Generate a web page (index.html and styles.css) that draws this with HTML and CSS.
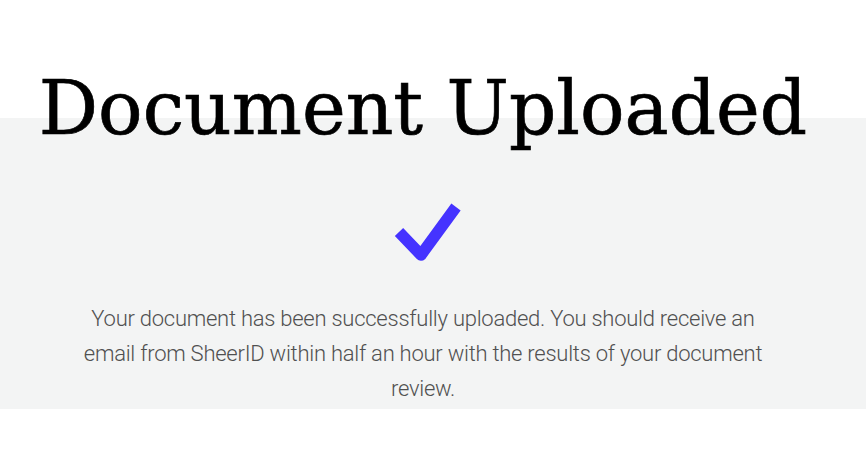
FILE: index.html
```html
<!DOCTYPE html>
<html>
<head>
<meta charset="utf-8">
<link rel="stylesheet" href="styles.css">
</head>
<body>
<main class="page">
  <h1 class="title">Document Uploaded</h1>
  <section class="panel">
    <svg class="check" width="74" height="70" viewBox="0 0 74 70">
      <path d="M9 34 L31 57 L66 9" fill="none" stroke="#4533ff" stroke-width="11.5" stroke-linecap="butt" stroke-linejoin="round"/>
    </svg>
    <p class="msg">Your document has been successfully uploaded. You should receive an email from SheerID within half an hour with the results of your document review.</p>
  </section>
</main>
</body>
</html>
```
FILE: styles.css
```css
html, body { margin: 0; padding: 0; background: #fff; }
.page { display: flex; flex-direction: column; width: 866px; padding-top: 58px; }
.title {
  position: relative;
  z-index: 1;
  margin: 0;
  padding-right: 20px;
  text-align: center;
  font-family: "DejaVu Serif", serif;
  font-weight: 400;
  font-size: 74px;
  line-height: 100px;
  color: #000;
  -webkit-text-stroke: 0.7px #000;
}
.panel {
  margin-top: -40px;
  height: 291px;
  background: #f3f4f4;
  display: flex;
  flex-direction: column;
  align-items: center;
  box-sizing: border-box;
  padding: 80px 20px 0 0;
}
.check { display: block; margin-left: 8px; }
.msg {
  margin: 33px 0 0;
  width: 700px;
  text-align: center;
  font-family: Roboto, sans-serif;
  font-weight: 300;
  font-size: 22px;
  letter-spacing: -0.25px;
  line-height: 35px;
  color: #505050;
}
```
